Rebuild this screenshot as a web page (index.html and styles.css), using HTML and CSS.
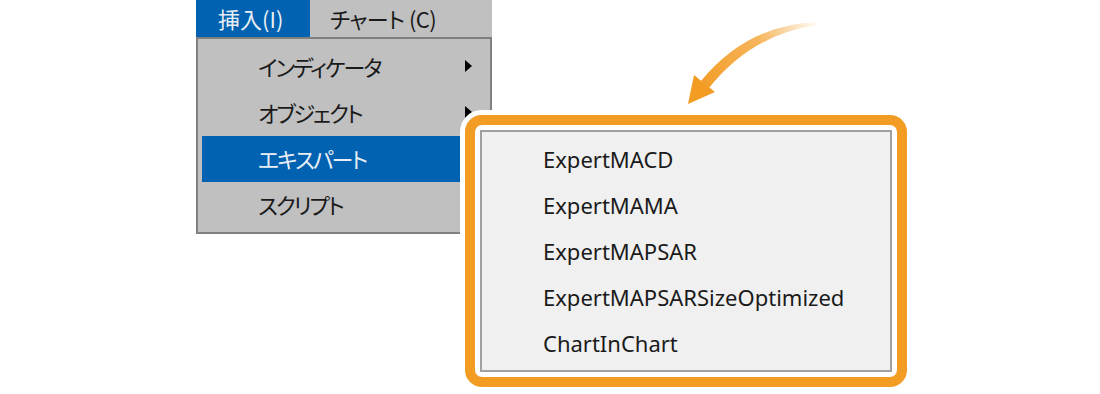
FILE: index.html
```html
<!DOCTYPE html>
<html lang="ja">
<head>
    <meta charset="UTF-8">
    <title>エキスパート メニュー</title>
    <link rel="stylesheet" href="styles.css">
</head>
<body>

<div class="stage">
    <div class="menu">
        <div class="menubar">
            <span class="top-item active">挿入(I)</span>
            <span class="top-item">チャート (C)</span>
        </div>
        <ul class="dropdown">
            <li class="has-sub">インディケータ</li>
            <li class="has-sub">オブジェクト</li>
            <li class="selected">エキスパート</li>
            <li>スクリプト</li>
        </ul>
    </div>

    <!-- curved pointer from the empty area down to the callout -->
    <svg class="arrow" width="150" height="100" viewBox="680 10 150 100">
        <defs>
            <linearGradient id="arrowFade" gradientUnits="userSpaceOnUse" x1="820" y1="22" x2="700" y2="92">
                <stop offset="0" stop-color="#f39c24" stop-opacity="0"/>
                <stop offset="0.45" stop-color="#f39c24" stop-opacity="0.75"/>
                <stop offset="1" stop-color="#f39c24" stop-opacity="1"/>
            </linearGradient>
        </defs>
        <path d="M818 22 Q748 24 701 81 L709 88 Q752 34 818 25 Z" fill="url(#arrowFade)"/>
        <polygon points="688,104 694,75 715,92" fill="#f39c24"/>
    </svg>

    <div class="callout">
        <div class="callout-frame">
            <ul class="panel">
                <li>ExpertMACD</li>
                <li>ExpertMAMA</li>
                <li>ExpertMAPSAR</li>
                <li>ExpertMAPSARSizeOptimized</li>
                <li>ChartInChart</li>
            </ul>
        </div>
    </div>
</div>

</body>
</html>
```

FILE: styles.css
```css
body {
    margin: 0;
    background: #fff;
    font-family: "Noto Sans CJK JP", "Noto Sans", sans-serif;
}

.stage {
    position: relative;
    width: 1100px;
    height: 394px;
    overflow: hidden;
}

/* windows style menu */
.menu {
    width: 296px;
    margin-left: 196px;
    font-size: 22px;
    font-feature-settings: "palt";
    color: #1a1a1a;
}

.menubar {
    display: flex;
    height: 37px;
    background: #c0c0c0;
    line-height: 36px;
}

.top-item {
    padding-left: 20px;
    letter-spacing: -0.5px;
}

.top-item.active {
    width: 92px;
    padding-left: 22px;
    letter-spacing: 0;
    background: #0062b0;
    color: #e8eef5;
}

.dropdown {
    list-style: none;
    margin: 0;
    padding: 5px 4px 4px 4px;
    background: #c0c0c0;
    border: 2px solid #808080;
}

.dropdown li {
    position: relative;
    height: 46px;
    line-height: 44px;
    padding-left: 56px;
    letter-spacing: -2px;
}

.dropdown li.selected {
    background: #0062b0;
    color: #e8eef5;
}

.dropdown li.has-sub::after {
    content: "";
    position: absolute;
    right: 14px;
    top: 16px;
    border-left: 7px solid #000;
    border-top: 6px solid transparent;
    border-bottom: 6px solid transparent;
}

.arrow {
    position: absolute;
    left: 680px;
    top: 10px;
}

/* zoomed sub menu, lies over the dropdown */
.callout {
    position: absolute;
    left: 460px;
    top: 110px;
    border: 5px solid #fff;
    border-radius: 22px;
}

.callout-frame {
    width: 412px;
    padding: 5px;
    background: #fff;
    border: 10px solid #f39c24;
    border-radius: 17px;
}

.panel {
    list-style: none;
    margin: 0;
    height: 230px;
    padding: 4px 0 4px 61px;
    background: #f0f0f0;
    border: 2px solid #a0a0a0;
}

.panel li {
    height: 46px;
    line-height: 46px;
    font-family: "Noto Sans", sans-serif;
    font-size: 22px;
    color: #1a1a1a;
}
```
